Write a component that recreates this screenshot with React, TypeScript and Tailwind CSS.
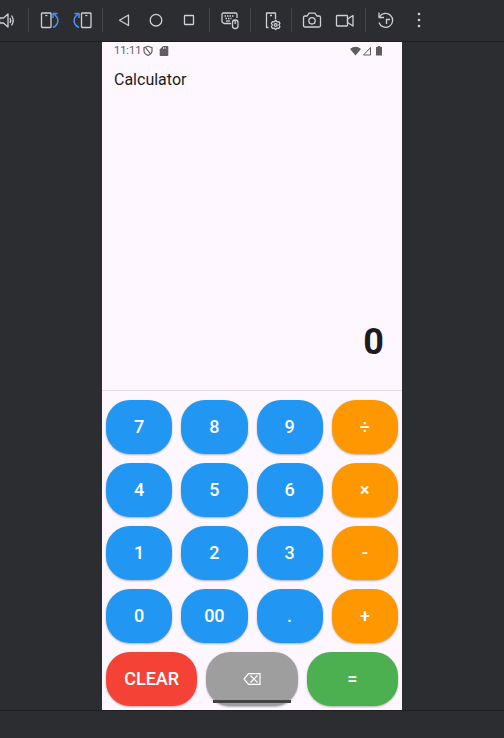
import type { ReactNode } from "react";

function ToolButton({ label, children }: { label: string; children: ReactNode }) {
  return (
    <button type="button" aria-label={label} className="flex h-8 w-[33px] shrink-0 items-center justify-center text-[#ced0d6]">
      <svg viewBox="0 0 21 21" className="h-[21px] w-[21px]" fill="none" stroke="currentColor" strokeWidth="1.3" strokeLinejoin="round">
        {children}
      </svg>
    </button>
  );
}

function Separator() {
  return <div className="mr-[3px] ml-1 h-6 w-px shrink-0 bg-[#43454a]" />;
}

function Toolbar() {
  return (
    <header className="flex h-[42px] items-center overflow-hidden border-b border-[#1e1f22] pb-px">
      <div className="-ml-[9px] flex items-center">
        <ToolButton label="Volume">
          <path d="M2.5 8h4L11 4v13l-4.500-4h-4z" />
          <path d="M13 8q1.400 2.500 0 5M14.500 5.500q3.400 5 0 10" />
        </ToolButton>
        <Separator />
        <ToolButton label="Rotate left">
          <rect x="3.500" y="3" width="9.500" height="14.500" rx="0.800" />
          <path d="M7.300 5.500h2" />
          <path stroke="#548af7" strokeWidth="1.500" d="M15 8V3.500h4.500M15.200 3.700C22 8 21 14.500 15 17.500" />
        </ToolButton>
        <ToolButton label="Rotate right">
          <rect x="10.500" y="3" width="9.500" height="14.500" rx="0.800" />
          <path d="M14.300 5.500h2" />
          <path stroke="#548af7" strokeWidth="1.500" d="M8 8V3.500H3.500M7.800 3.700C1 8 2 14.500 8 17.500" />
        </ToolButton>
        <Separator />
        <ToolButton label="Back">
          <path d="M16.500 5v10.500L7.500 10.200z" />
        </ToolButton>
        <ToolButton label="Home">
          <circle cx="11" cy="10.200" r="5.800" />
        </ToolButton>
        <ToolButton label="Overview">
          <rect x="6.500" y="5.500" width="9" height="9" rx="0.500" />
        </ToolButton>
        <Separator />
        <ToolButton label="Hardware input">
          <path d="M12 13.500H5l-2-1.500V4.500Q3 3 4.500 3h12Q18 3 18 4.500V8" />
          <path strokeDasharray="1.500 1" d="M5.500 6h10M6.500 8.500h6" />
          <path d="M7 11h4" />
          <rect x="13.500" y="10" width="5.500" height="8.500" rx="2.500" />
          <path d="M16.200 10v4" />
        </ToolButton>
        <Separator />
        <ToolButton label="Device settings">
          <path d="M8.500 17.500h-2V3h9v6M10 5.500h2" />
          <path d="m15.700 10.300 1.300 1.500 2-.1.900 1.700-1 1.600 1 1.600-.9 1.700-2-.1-1.300 1.300-1.400-1.300-2 .1-.9-1.700 1-1.600-1-1.600.9-1.700 2 .1z" />
          <circle cx="15.700" cy="15" r="1.400" />
        </ToolButton>
        <Separator />
        <ToolButton label="Take screenshot">
          <path d="M2.500 7.500Q2.500 6 4 6h2.200L8 3.200h6L15.800 6H18q1.500 0 1.500 1.500v8Q19.500 17 18 17H4q-1.500 0-1.500-1.500z" />
          <circle cx="11" cy="10.800" r="3.200" />
        </ToolButton>
        <ToolButton label="Record screen">
          <rect x="2.500" y="5.500" width="11" height="10.500" rx="0.800" />
          <path d="m13.500 9 5.500-3.500v10.500l-5.500-3.500z" />
        </ToolButton>
        <Separator />
        <ToolButton label="Reset">
          <path d="M4 2.500v5h5M4.500 7a7 7 0 1 1-.5 5.500M11.500 14v-4.500H15" />
        </ToolButton>
        <ToolButton label="More">
          <g fill="currentColor" stroke="none">
            <circle cx="11" cy="4" r="1.300" />
            <circle cx="11" cy="10" r="1.300" />
            <circle cx="11" cy="16" r="1.300" />
          </g>
        </ToolButton>
      </div>
    </header>
  );
}

function StatusBar() {
  return (
    <div className="flex h-[18px] items-center px-3 text-[11px] text-[#5f5c63]">
      <span>11:11</span>
      <svg viewBox="0 0 10 12" className="ml-0.5 h-3 w-2.5" fill="none" stroke="currentColor" strokeWidth="1.200">
        <path d="M5 1.300 9 2.600v3.200q0 3.200-4 4.700-4-1.500-4-4.700V2.600zM2.500 2.500l5 6.500" />
      </svg>
      <svg viewBox="0 0 10 12" className="ml-1.5 h-3 w-2.5" fill="currentColor">
        <path d="M4 1h4.500q.8 0 .8.800v8.400q0 .8-.8.800h-7q-.8 0-.8-.8V4.500z" />
        <path stroke="#fef7ff" strokeWidth="0.700" d="M4.500 2v2M6.200 2v2" />
      </svg>
      <div className="ml-auto flex items-center pr-2">
        <svg viewBox="0 0 11 10" className="h-2.5 w-[11px]" fill="currentColor">
          <path d="M0 3q5.500-4.500 11 0L5.500 9.500z" />
        </svg>
        <svg viewBox="0 0 10 10" className="ml-px h-2.5 w-2.5" fill="none" stroke="currentColor">
          <path d="M8.500 1.500v7.500h-7z" />
        </svg>
        <svg viewBox="0 0 6 10" className="ml-1 h-2.5 w-1.5" fill="currentColor">
          <path d="M1.700 0h2.600v1H6v8.500H0V1h1.700z" />
        </svg>
      </div>
    </div>
  );
}

const keys = ["7", "8", "9", "÷", "4", "5", "6", "×", "1", "2", "3", "-", "0", "00", ".", "+"];
const operators = ["÷", "×", "-", "+"];

function Key({ color, name, children }: { color: string; name?: string; children: ReactNode }) {
  return (
    <button
      type="button"
      aria-label={name}
      className={`flex h-[54px] items-center justify-center rounded-[24px] text-lg font-medium text-white shadow-[0_1px_2px_rgba(0,0,0,0.3)] ${color}`}
    >
      {children}
    </button>
  );
}

function BackspaceIcon() {
  return (
    <svg viewBox="0 0 18 12" className="h-3 w-[18px]" fill="none" stroke="currentColor" strokeWidth="1.2">
      <path d="M5.500 0.600h11.500v10.800H5.500L1 6zM7.500 2.500l7 7M14.500 2.500l-7 7" />
    </svg>
  );
}

export default function App() {
  return (
    <div className="flex min-h-screen flex-col bg-[#2b2d30] font-['Roboto','DejaVu_Sans',sans-serif]">
      <Toolbar />
      <main className="relative mx-auto flex w-full max-w-[300px] flex-1 flex-col bg-[#fef7ff] text-[#1d1b20]">
        <StatusBar />
        <h1 className="px-3 pt-2 text-base">Calculator</h1>
        <output className="flex flex-1 items-end justify-end px-[18px] pb-7 text-4xl font-bold">0</output>
        <section className="flex flex-col gap-[9px] border-t border-[#e4dee6] px-1 pt-[9px] pb-1">
          <div className="grid grid-cols-4 gap-[9px]">
            {keys.map((key) => (
              <Key key={key} color={operators.includes(key) ? "bg-[#ff9800]" : "bg-[#2196f3]"}>
                {key}
              </Key>
            ))}
          </div>
          <div className="grid grid-cols-3 gap-[9px]">
            <Key color="bg-[#f44336]">CLEAR</Key>
            <Key name="Backspace" color="bg-[#9e9e9e]">
              <BackspaceIcon />
            </Key>
            <Key color="bg-[#4caf50]">=</Key>
          </div>
        </section>
        <div className="absolute bottom-[7px] left-1/2 h-[3px] w-[78px] -translate-x-1/2 bg-[#424242]" />
      </main>
      <footer className="h-7 border-t border-[#1e1f22]" />
    </div>
  );
}
